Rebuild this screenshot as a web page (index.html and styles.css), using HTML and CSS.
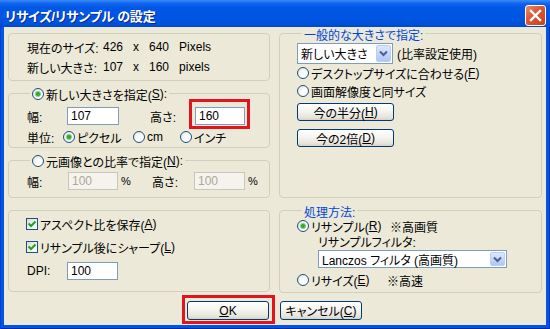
FILE: index.html
```html
<!DOCTYPE html>
<html lang="ja">
<head>
<meta charset="utf-8">
<title>リサイズ/リサンプル の設定</title>
<link rel="stylesheet" href="styles.css">
</head>
<body>
<div class="window">
  <div class="titlebar">
    <span class="title">リサイズ/リサンプル の設定</span>
    <span class="close">
      <svg width="21" height="21" viewBox="0 0 21 21"><path d="M6 6 L15 15 M15 6 L6 15" stroke="#fff" stroke-width="2.4" stroke-linecap="square"/></svg>
    </span>
  </div>
  <div class="frame">
    <div class="client">
      <div class="columns">
        <div class="col">
          <div class="group info">
            <div class="info-row"><span class="info-label">現在のサイズ:</span><span class="info-val">426&nbsp;&nbsp;&nbsp;x&nbsp;&nbsp;&nbsp;640&nbsp;&nbsp;&nbsp;Pixels</span></div>
            <div class="info-row"><span class="info-label">新しい大きさ:</span><span class="info-val">107&nbsp;&nbsp;&nbsp;x&nbsp;&nbsp;&nbsp;160&nbsp;&nbsp;&nbsp;pixels</span></div>
          </div>
          <div class="group size">
            <div class="legend"><span class="radio on"></span>新しい大きさを指定(<u>S</u>):</div>
            <div class="field-row first">
              <span class="lbl lbl-w">幅:</span>
              <input class="tb tb-w" value="107">
              <span class="lbl lbl-h">高さ:</span>
              <span class="mark mark-input"><input class="tb tb-h" value="160"></span>
            </div>
            <div class="field-row units">
              <span class="lbl lbl-unit">単位:</span>
              <span class="opt opt-px"><span class="radio on"></span>ピクセル</span>
              <span class="opt opt-cm"><span class="radio"></span>cm</span>
              <span class="opt"><span class="radio"></span>インチ</span>
            </div>
          </div>
          <div class="group ratio">
            <div class="legend"><span class="radio"></span>元画像との比率で指定(<u>N</u>):</div>
            <div class="field-row ratio-row">
              <span class="lbl lbl-w2">幅:</span>
              <input class="tb tb-r" value="100" disabled>
              <span class="pct pct-1">%</span>
              <span class="lbl lbl-h2">高さ:</span>
              <input class="tb tb-r2" value="100" disabled>
              <span class="pct">%</span>
            </div>
          </div>
          <div class="group checks">
            <div class="check-row"><span class="check"><svg width="10" height="10" viewBox="0 0 10 10"><path d="M1.5 4.5 L4 7 L8.5 2.5" fill="none" stroke="#21A121" stroke-width="2"/></svg></span>アスペクト比を保存(<u>A</u>)</div>
            <div class="check-row second"><span class="check"><svg width="10" height="10" viewBox="0 0 10 10"><path d="M1.5 4.5 L4 7 L8.5 2.5" fill="none" stroke="#21A121" stroke-width="2"/></svg></span>リサンプル後にシャープ(<u>L</u>)</div>
            <div class="field-row dpi-row">
              <span class="lbl lbl-w">DPI:</span>
              <input class="tb tb-dpi" value="100">
            </div>
          </div>
        </div>
        <div class="col">
          <div class="group general">
            <div class="legend blue">一般的な大きさで指定:</div>
            <div class="combo-row">
              <div class="combo combo-size">
                <span class="combo-text">新しい大きさ</span>
                <span class="combo-btn"><svg width="9" height="7" viewBox="0 0 9 7"><path d="M1 1.5 L4.5 5 L8 1.5" fill="none" stroke="#4D6185" stroke-width="2"/></svg></span>
              </div>
              <span class="combo-note">(比率設定使用)</span>
            </div>
            <div class="radio-row r1"><span class="radio"></span>デスクトップサイズに合わせる(<u>F</u>)</div>
            <div class="radio-row r2"><span class="radio"></span>画面解像度と同サイズ</div>
            <button class="btn btn-half">今の半分(<u>H</u>)</button>
            <button class="btn btn-double">今の2倍(<u>D</u>)</button>
          </div>
          <div class="group method">
            <div class="legend blue">処理方法:</div>
            <div class="radio-row m1"><span class="radio-label w-resample"><span class="radio on"></span>リサンプル(<u>R</u>)</span><span>※高画質</span></div>
            <div class="filter-label">リサンプルフィルタ:</div>
            <div class="combo combo-filter">
              <span class="combo-text">Lanczos フィルタ (高画質)</span>
              <span class="combo-btn"><svg width="9" height="7" viewBox="0 0 9 7"><path d="M1 1.5 L4.5 5 L8 1.5" fill="none" stroke="#4D6185" stroke-width="2"/></svg></span>
            </div>
            <div class="radio-row m2"><span class="radio-label w-resize"><span class="radio"></span>リサイズ(<u>E</u>)</span><span>※高速</span></div>
          </div>
        </div>
      </div>
      <div class="actions">
        <span class="mark mark-ok"><button class="btn btn-ok"><u>O</u>K</button></span>
        <button class="btn btn-cancel">キャンセル(<u>C</u>)</button>
      </div>
    </div>
  </div>
</div>
</body>
</html>
```

FILE: styles.css
```css
* { box-sizing: border-box; }
html, body { margin: 0; padding: 0; }
body {
  width: 550px;
  height: 329px;
  overflow: hidden;
  background: #0054E3;
  font-family: "Liberation Sans", "Noto Sans CJK JP", sans-serif;
  font-size: 12px;
  font-feature-settings: "palt";
  color: #000;
}
u { text-underline-offset: 1px; }

.window {
  width: 550px;
  height: 329px;
  display: flex;
  flex-direction: column;
}

.titlebar {
  height: 27px;
  flex: none;
  display: flex;
  align-items: center;
  padding: 3px 4px 0 5px;
  background: linear-gradient(#3A8DF8 0%, #1366EE 12%, #0058E6 28%, #0055E3 60%, #0052DC 85%, #0049CB 100%);
}
.title {
  color: #fff;
  font-weight: bold;
  font-size: 13px;
  letter-spacing: -0.2px;
  text-shadow: 1px 1px 0 #0A2B8E;
}
.close {
  margin-left: auto;
  width: 21px;
  height: 21px;
  border: 1px solid #fff;
  border-radius: 3px;
  background: linear-gradient(135deg, #E98C6E 0%, #DC5A35 40%, #C8401C 100%);
  display: flex;
  align-items: center;
  justify-content: center;
}
.close svg { display: block; margin: -1px; }

.frame {
  flex: 1;
  display: flex;
  padding: 0 4px 4px 4px;
  background: #0055E5;
  box-shadow: inset 1px 0 0 #0041C8, inset -1px 0 0 #0030A8, inset 0 -1px 0 #00289A;
}
.client {
  flex: 1;
  background: #ECE9D8;
  display: flex;
  flex-direction: column;
}

.columns {
  display: grid;
  grid-template-columns: 262px 263px;
  column-gap: 9px;
  padding: 6px 0 0 4px;
}
.col { display: flex; flex-direction: column; }

.group {
  border: 1px solid #D0D0BF;
  border-radius: 4px;
  display: flex;
  flex-direction: column;
}
.group + .group { margin-top: 12px; }

.legend {
  align-self: flex-start;
  display: flex;
  align-items: center;
  height: 14px;
  margin-top: -7px;
  margin-left: 21px;
  padding: 0 2px;
  background: #ECE9D8;
  white-space: nowrap;
}
.legend.blue {
  color: #0046D5;
  height: 12px;
  margin-top: -6px;
  margin-left: 5px;
}

.radio {
  width: 12px;
  height: 12px;
  flex: none;
  border: 1px solid #1C5180;
  border-radius: 50%;
  background: radial-gradient(circle at 65% 65%, #FFFFFF 30%, #DCDCD2 100%);
  margin-right: 2px;
  position: relative;
}
.radio.on::after {
  content: "";
  position: absolute;
  left: 3px;
  top: 3px;
  width: 4px;
  height: 4px;
  border-radius: 50%;
  background: #2FA82F;
  box-shadow: 0 0 0 1px #7ED07E;
}

.check {
  width: 12px;
  height: 12px;
  flex: none;
  border: 1px solid #1C5180;
  background: linear-gradient(135deg, #DCDCD7, #FFFFFF);
  display: flex;
  align-items: center;
  justify-content: center;
  margin-right: 2px;
}
.check svg { display: block; }

/* left column */
.info {
  height: 48px;
  padding: 3px 0 0 18px;
}
.info-row {
  display: flex;
  align-items: center;
  height: 20px;
  white-space: nowrap;
}
.info-label { width: 76px; flex: none; }

.size { height: 55px; }
.ratio { height: 38px; }
.checks { height: 82px; padding: 6px 0 0 17px; }

.field-row {
  display: flex;
  align-items: center;
  height: 18px;
  padding-left: 18px;
  white-space: nowrap;
}
.field-row.first { margin-top: 6px; }
.field-row.units { margin-top: 3px; }
.ratio-row { margin-top: 4px; }
.dpi-row { margin-top: 8px; padding-left: 1px; }

.lbl { flex: none; }
.lbl-w { width: 40px; }
.lbl-h { width: 45px; margin-left: 31px; }
.lbl-unit { width: 36px; }
.lbl-w2 { width: 41px; }
.lbl-h2 { width: 42px; }

.tb {
  height: 18px;
  border: 1px solid #7F9DB9;
  background: #fff;
  padding: 0 3px;
  margin: 0;
  font: inherit;
  font-size: 12px;
  color: #000;
  outline: none;
  flex: none;
}
.tb:disabled {
  background: #F4F3EE;
  border-color: #C9C7BA;
  color: #ACA899;
}
.tb-w { width: 52px; }
.tb-h { width: 50px; }
.tb-r { width: 50px; }
.tb-r2 { width: 51px; }
.tb-dpi { width: 51px; }

.pct { padding-left: 3px; font-size: 11px; }
.pct-1 { width: 34px; flex: none; }

.opt { display: flex; align-items: center; flex: none; }
.opt-px { width: 70px; }
.opt-cm { width: 47px; }

.check-row {
  display: flex;
  align-items: center;
  height: 14px;
  white-space: nowrap;
}
.check-row.second { margin-top: 9px; }

/* right column */
.general { height: 165px; padding-left: 17px; }
.method { height: 83px; padding-left: 17px; }

.combo-row {
  display: flex;
  align-items: center;
  margin-top: 3px;
}
.combo {
  display: flex;
  align-items: center;
  border: 1px solid #7F9DB9;
  background: #fff;
  padding: 1px;
  flex: none;
}
.combo-size { width: 96px; height: 21px; }
.combo-filter { width: 189px; height: 18px; margin-left: 21px; }
.combo-text { flex: 1; padding-left: 2px; white-space: nowrap; overflow: hidden; }
.combo-btn {
  width: 15px;
  align-self: stretch;
  border: 1px solid #B9CDF6;
  border-radius: 2px;
  background: linear-gradient(#DDE8FE, #C0D3FB 60%, #AEC6F8);
  display: flex;
  align-items: center;
  justify-content: center;
}
.combo-btn svg { display: block; }
.combo-note { margin-left: 4px; white-space: nowrap; }

.radio-row {
  display: flex;
  align-items: center;
  height: 14px;
  white-space: nowrap;
}
.radio-row.r1 { margin-top: 2px; }
.radio-row.r2 { margin-top: 4px; }
.radio-row.m1 { margin-top: 2px; }
.radio-row.m2 { margin-top: 5px; }
.radio-label { display: flex; align-items: center; flex: none; }
.w-resample { width: 93px; }
.w-resize { width: 90px; }
.filter-label {
  height: 14px;
  line-height: 14px;
  margin-top: 3px;
  padding-left: 21px;
}

.btn {
  font: inherit;
  font-size: 12px;
  color: #000;
  margin: 0;
  padding: 0;
  border: 1px solid #003C74;
  border-radius: 3px;
  background: linear-gradient(#FFFFFF 0%, #F4F4F0 45%, #E6E3D8 85%, #D6D0C5 100%);
  display: flex;
  align-items: center;
  justify-content: center;
  white-space: nowrap;
}
.btn-half, .btn-double { width: 97px; height: 18px; }
.btn-half { margin-top: 5px; }
.btn-double { margin-top: 8px; }

.actions {
  display: flex;
  align-items: center;
  gap: 11px;
  padding-left: 183px;
  margin-top: 8px;
}
.btn-ok, .btn-cancel { width: 82px; height: 19px; }

/* red annotation frames drawn over the controls */
.mark { position: relative; display: flex; flex: none; }
.mark::after {
  content: "";
  position: absolute;
  border: 3px solid #E3141C;
  pointer-events: none;
}
.mark-input::after { left: -6px; right: -5px; top: -8px; bottom: -4px; }
.mark-ok::after { left: -5px; right: -6px; top: -6px; bottom: -4px; }
```
